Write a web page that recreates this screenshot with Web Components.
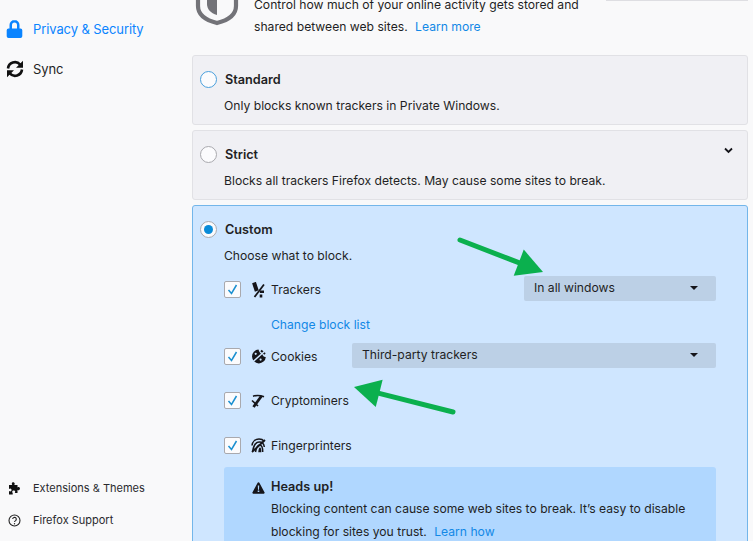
<!DOCTYPE html>
<html lang="en">
<head>
<meta charset="utf-8">
<title>Privacy &amp; Security</title>
<style>
  html, body { margin: 0; height: 100%; overflow: hidden; background: #f9f9fa; }
  body { font: 12.15px/22px Inter, "Liberation Sans", sans-serif; color: #1f1f24; }
</style>
</head>
<body>
<fx-prefs>
  <fx-sidebar slot="side">
    <fx-nav-item icon="lock" active>Privacy &amp; Security</fx-nav-item>
    <fx-nav-item icon="sync">Sync</fx-nav-item>
    <fx-nav-item icon="puzzle" slot="bottom" small>Extensions &amp; Themes</fx-nav-item>
    <fx-nav-item icon="help" slot="bottom" small>Firefox Support</fx-nav-item>
  </fx-sidebar>

  <fx-intro>
    Control how much of your online activity gets stored and<br>
    shared between web sites. <a-link>Learn more</a-link>
  </fx-intro>

  <fx-card heading="Standard" height="70">
    Only blocks known trackers in Private Windows.
  </fx-card>

  <fx-card heading="Strict" height="70" chevron>
    Blocks all trackers Firefox detects. May cause some sites to break.
  </fx-card>

  <fx-card heading="Custom" selected>
    Choose what to block.
    <fx-block-row slot="extra" icon="trackers" label="Trackers" top="10" select="In all windows" select-width="192"></fx-block-row>
    <fx-block-row slot="extra" top="10"><a-link plain>Change block list</a-link></fx-block-row>
    <fx-block-row slot="extra" icon="cookies" label="Cookies" top="7" select="Third-party trackers" select-width="364"></fx-block-row>
    <fx-block-row slot="extra" icon="miners" label="Cryptominers" top="19"></fx-block-row>
    <fx-block-row slot="extra" icon="prints" label="Fingerprinters" top="19.5"></fx-block-row>
    <fx-notice slot="extra">
      <span slot="title">Heads up!</span>
      Blocking content can cause some web sites to break. It’s easy to disable<br>
      blocking for sites you trust. <a-link>Learn how</a-link>
    </fx-notice>
  </fx-card>

  <fx-arrow x1="460" y1="240" x2="543" y2="272"></fx-arrow>
  <fx-arrow x1="453" y1="412" x2="354" y2="387"></fx-arrow>
</fx-prefs>

<script>
const ICONS = {
  lock: `<svg width="17" height="20" viewBox="0 0 17 20"><path fill="#0a84ff" d="M8.500 1A5 5 0 0 0 3.500 6v3.500H2.500A1.800 1.800 0 0 0 .7 11.300v6A1.800 1.800 0 0 0 2.500 19h12a1.800 1.800 0 0 0 1.800-1.700v-6a1.800 1.800 0 0 0-1.800-1.800h-1V6a5 5 0 0 0-5-5zM6 9.500V6a2.500 2.500 0 0 1 5 0v3.500z"/></svg>`,
  sync: `<svg width="18" height="18" viewBox="0 0 18 18" fill="none" stroke="#111" stroke-width="2.600"><path d="M2 8.500A7 7 0 0 1 14.200 4.600"/><path d="M16 9.500A7 7 0 0 1 3.800 13.400"/><path fill="#111" stroke="none" d="M17 .8v7h-7zM1 17.200v-7h7z"/></svg>`,
  puzzle: `<svg width="13" height="13" viewBox="0 0 13 13"><path fill="#111" d="M4.300.6c1-.6 2.400 0 2.400 1.200 0 .5-.2.800-.5 1.200h3.300v2.600c.4-.4.700-.5 1.200-.5 1.700 0 1.700 3.100 0 3.100-.5 0-.8-.1-1.200-.5V11H6.700c.3-.4.500-.7.500-1.200 0-.9-.8-1.300-1.500-1.300S4.200 8.900 4.200 9.800c0 .5.200.8.500 1.200v1.500H1V8.900c.4.300.8.500 1.200.5 1.800 0 1.800-3 0-3-.4 0-.8.200-1.200.5V3h3.300c-.3-.4-.5-.7-.5-1.200 0-.5.200-.9.500-1.200z"/></svg>`,
  help: `<svg width="13" height="13" viewBox="0 0 13 13" fill="none" stroke="#222" stroke-width="1.100"><circle cx="6.500" cy="6.500" r="5.500"/><path d="M4.700 5.100a1.800 1.800 0 1 1 2.900 1.500c-.7.500-1.100.8-1.100 1.500"/><circle cx="6.500" cy="9.800" r=".7" fill="#222" stroke="none"/></svg>`,
  trackers: `<svg width="15" height="16" viewBox="0 0 15 16" fill="none" stroke="#15151a"><path stroke-width="4" d="M3 .5 5.800 9"/><path stroke-width="1.800" d="M13 2.500 3.500 15"/><path stroke-width="2.600" d="M8.800 9.800h4.200M10 12.500v3"/></svg>`,
  cookies: `<svg width="16" height="15" viewBox="0 0 16 15"><path fill="#15151a" d="M7.500.6A6.900 6.900 0 1 0 14.800 8c-1.800.2-3-.8-3.200-2.500C9.800 5.300 8 3 7.500.6z"/><path stroke="#15151a" stroke-width="2" d="M10 1.500l4 3.500"/><path stroke="#cfe6ff" stroke-width="1.400" d="M.5 14 14.500 1.500"/><circle cx="4.700" cy="4.800" r="1.100" fill="#cfe6ff"/><circle cx="9.600" cy="10.600" r="1.100" fill="#cfe6ff"/></svg>`,
  miners: `<svg width="14" height="14" viewBox="0 0 14 14" fill="none" stroke="#15151a"><path stroke-width="1.600" d="M2 2.200c3.400-1.100 7.300-1 11 .6"/><path stroke-width="2.800" d="M10.500 2 2.500 13"/><path stroke-width="1.600" d="M1 6.500 7 12"/></svg>`,
  prints: `<svg width="15" height="15" viewBox="0 0 15 15" fill="none" stroke="#15151a" stroke-width="1.500"><path d="M1 7.500C1.500 3.500 4.500 1 8 1c2.200 0 4 .8 5.200 2.200"/><path d="M1.700 13C2.700 7 5.300 4 8.500 4c2.900 0 4.500 2 4.800 5"/><path d="M4.500 14c.8-4.200 2-7 4.200-7 2.400 0 3 2.800 3 7"/><path d="M8 14.300c.2-2.200.5-4 1-4 .5 0 .6 1.800.6 4"/><path stroke-width="1.800" d="M1 14 14 2"/></svg>`,
  warning: `<svg width="13" height="12" viewBox="0 0 13 12"><path fill="#15151a" d="M6.500.3c.4 0 .8.200 1 .6l5.100 9.500c.3.600-.1 1.300-.8 1.300H1.200c-.7 0-1.100-.7-.8-1.300L5.500.9c.2-.4.600-.6 1-.6z"/><path fill="#b0d7ff" d="M5.800 3.500h1.400l-.2 4.200H6zM5.700 8.600h1.600v1.500H5.700z"/></svg>`,
  shield: `<svg width="46" height="26" viewBox="0 0 46 26" fill="none"><path d="M3 -14v20c0 8 7 14 19 17 12-3 19-9 19-17v-20" stroke="#737378" stroke-width="4.200"/><path fill="#737378" d="M22 -6V15C15.500 13 12 9 12 4V-6z"/></svg>`
};

function define(name, css, html, init) {
  customElements.define(name, class extends HTMLElement {
    connectedCallback() {
      if (this.shadowRoot) return;
      this.attachShadow({ mode: "open" });
      this.shadowRoot.innerHTML = `<style>${css}</style>${typeof html === "function" ? html(this) : html}`;
      if (init) init(this);
    }
  });
}

define("a-link", `
  :host { display: inline; color: #1288e6; margin-left: 4px; }
  :host([plain]) { margin-left: 0; }
`, `<slot></slot>`);

define("fx-prefs", `
  :host { display: grid; grid-template-columns: 192px 556px; grid-template-rows: 541px; height: 541px; overflow: hidden; position: relative; }
  .side { grid-column: 1; display: flex; min-height: 0; }
  .main { grid-column: 2; display: flex; flex-direction: column; gap: 5px; min-width: 0; }
`, `
  <div class="side"><slot name="side"></slot></div>
  <div class="main"><slot></slot></div>
`);

define("fx-sidebar", `
  :host { display: flex; flex-direction: column; justify-content: space-between; flex: 1; }
  .top { padding-top: 17px; display: flex; flex-direction: column; gap: 16px; }
  .bottom { padding-bottom: 9px; display: flex; flex-direction: column; gap: 8px; }
`, `
  <div class="top"><slot></slot></div>
  <div class="bottom"><slot name="bottom"></slot></div>
`);

define("fx-nav-item", `
  :host { display: block; }
  .item { display: flex; align-items: center; height: 24px; padding-left: 6px; font-size: 13px; letter-spacing: -.1px; color: #1f1f24; }
  .icon { width: 27px; display: flex; align-items: center; }
  :host([active]) .item { color: #0a84ff; }
  :host([small]) .item { font-size: 11px; padding-left: 8px; color: #2a2a2e; letter-spacing: 0; }
  :host([small]) .icon { width: 25px; }
`, el => `<div class="item"><span class="icon">${ICONS[el.getAttribute("icon")]}</span><slot></slot></div>`);

define("fx-intro", `
  :host { display: flex; height: 56px; margin-top: -6px; flex: none; position: relative; }
  .shield { width: 62px; padding-left: 3px; margin-top: 6px; height: 26px; overflow: hidden; box-sizing: border-box; flex: none; }
  .shield svg { display: block; }
  .text { white-space: nowrap; }
  .search { position: absolute; right: 0; top: 6px; width: 142px; height: 1px; background: #dedee2; }
`, `<div class="shield">${ICONS.shield}</div><div class="text"><slot></slot></div><div class="search"></div>`);

define("fx-card", `
  :host { display: block; flex: none; box-sizing: border-box; border: 1px solid #e1e1e5; border-radius: 3px; background: #f0f0f4; padding: 12px 0 0 7px; position: relative; }
  :host([selected]) { background: #cfe6ff; border-color: #73b6ea; padding-bottom: 40px; }
  .head { display: flex; align-items: center; gap: 8px; font-weight: 600; font-size: 12.700px; height: 22px; }
  .head b { font-weight: 600; padding-top: 2px; }
  .radio { width: 17px; height: 17px; box-sizing: border-box; border-radius: 50%; border: 1px solid #a9a9ae; background: #fbfbfd; display: flex; align-items: center; justify-content: center; }
  :host([heading="Standard"]) .radio { border: 1.500px solid #4aa0dd; }
  :host([selected]) .radio::after { content: ""; width: 9px; height: 9px; border-radius: 50%; background: #0a8bd8; }
  .body { padding: 5px 0 0 24px; white-space: nowrap; }
  .chevron { position: absolute; right: 14px; top: 16px; }
`, el => `
  <div class="head"><span class="radio"></span><b>${el.getAttribute("heading")}</b></div>
  <div class="body"><slot></slot><slot name="extra"></slot></div>
  ${el.hasAttribute("chevron") ? `<svg class="chevron" width="9" height="7" viewBox="0 0 9 7" fill="none" stroke="#15151a" stroke-width="1.800"><path d="M1 1.500l3.500 3.500L8 1.500"/></svg>` : ""}
`, el => { if (el.getAttribute("height")) el.style.height = el.getAttribute("height") + "px"; });

define("fx-block-row", `
  :host { display: flex; align-items: center; min-height: 25px; width: 492px; }
  .check { width: 17px; height: 17px; box-sizing: border-box; border: 1px solid #a9a9ae; border-radius: 2px; background: #fbfbfd; display: flex; align-items: center; justify-content: center; flex: none; margin-right: 10px; }
  .icon { width: 20px; display: flex; flex: none; }
  .label { padding-top: 1px; }
  .select { margin-left: auto; height: 25px; margin-top: -3px; box-sizing: border-box; background: #bcd0e6; border-radius: 2px; padding-left: 10px; padding-right: 18px; display: flex; align-items: center; justify-content: space-between; }
  .select i { width: 0; height: 0; border: 4px solid transparent; border-top: 4px solid #15151a; border-bottom: 0; }
  .plain { padding-left: 47px; }
`, el => {
  const icon = el.getAttribute("icon");
  if (!icon) return `<div class="plain"><slot></slot></div>`;
  const check = `<span class="check"><svg width="11" height="11" viewBox="0 0 11 11" fill="none" stroke="#1a8fd0" stroke-width="1.500"><path d="M1.500 6l3 3.500L9.500 1"/></svg></span>`;
  const sel = el.getAttribute("select");
  return `${check}<span class="icon">${ICONS[icon]}</span><span class="label">${el.getAttribute("label")}</span>` +
    (sel ? `<div class="select" style="width:${el.getAttribute("select-width")}px">${sel}<i></i></div>` : "");
}, el => { el.style.marginTop = (el.getAttribute("top") || 0) + "px"; });

define("fx-notice", `
  :host { display: block; width: 492px; margin-top: 9.500px; box-sizing: border-box; background: #b0d7ff; border-radius: 3px; padding: 10px 0 12px 47px; position: relative; line-height: 22.500px; }
  .title { font-weight: 600; font-size: 12.700px; height: 21px; display: flex; align-items: center; gap: 6px; margin-left: -19px; }
`, `<div class="title">${ICONS.warning}<slot name="title"></slot></div><slot></slot>`);

define("fx-arrow", `
  :host { display: block; position: absolute; inset: 0; pointer-events: none; }
  svg { display: block; }
`, el => {
  const [x1, y1, x2, y2] = ["x1", "y1", "x2", "y2"].map(a => +el.getAttribute(a));
  const len = Math.hypot(x2 - x1, y2 - y1), ux = (x2 - x1) / len, uy = (y2 - y1) / len;
  const bx = x2 - ux * 26, by = y2 - uy * 26, half = 14;
  const head = `${x2},${y2} ${bx - uy * half},${by + ux * half} ${bx + uy * half},${by - ux * half}`;
  return `<svg width="753" height="541"><line x1="${x1}" y1="${y1}" x2="${bx}" y2="${by}" stroke="#0bb04e" stroke-width="5" stroke-linecap="round"/><polygon points="${head}" fill="#0bb04e"/></svg>`;
});
</script>
</body>
</html>
